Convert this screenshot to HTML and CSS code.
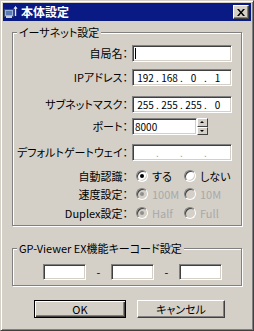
FILE: index.html
```html
<!DOCTYPE html>
<html lang="ja">
<head>
  <meta charset="UTF-8">
  <title>本体設定</title>
  <link rel="stylesheet" href="styles.css">
</head>
<body>
  <div class="window">
    <div class="titlebar">
      <svg class="app-icon" width="14" height="12" viewBox="0 0 14 12">
        <rect x="0.5" y="3.5" width="9" height="7" fill="#9ab4d8" stroke="#3a4a6a"/>
        <rect x="2" y="5" width="6" height="4" fill="#5a7ab8"/>
        <rect x="2" y="10" width="6" height="2" fill="#c8d0dc"/>
        <path d="M11.5 1v9" stroke="#e8e8e8" stroke-width="1.4"/>
        <path d="M10 3l1.5-2.5L13 3" fill="none" stroke="#e8e8e8"/>
      </svg>
      <span class="title">本体設定</span>
      <span class="close">
        <svg width="8" height="7" viewBox="0 0 8 7">
          <path d="M0 0h2l2 2.5L6 0h2L5 3.5 8 7H6L4 4.5 2 7H0l3-3.5z" fill="#000"/>
        </svg>
      </span>
    </div>

    <div class="content">
      <fieldset class="group ethernet">
        <legend>イーサネット設定</legend>
        <div class="form">
          <label>自局名：</label>
          <div class="edit"><span class="caret"></span></div>

          <label>IPアドレス：</label>
          <div class="edit ip">
            <span>192</span><i>.</i><span>168</span><i>.</i><span>0</span><i>.</i><span>1</span>
          </div>

          <label>サブネットマスク：</label>
          <div class="edit ip">
            <span>255</span><i>.</i><span>255</span><i>.</i><span>255</span><i>.</i><span>0</span>
          </div>

          <label>ポート：</label>
          <div class="spin">
            <div class="edit text">8000</div>
            <div class="spin-buttons">
              <span class="arrow up"></span>
              <span class="arrow down"></span>
            </div>
          </div>

          <label>デフォルトゲートウェイ：</label>
          <div class="edit ip empty">
            <span></span><i>.</i><span></span><i>.</i><span></span><i>.</i><span></span>
          </div>

          <label class="radio-label">自動認識：</label>
          <div class="choices">
            <span class="radio checked"><b></b>する</span>
            <span class="radio"><b></b>しない</span>
          </div>

          <label class="radio-label">速度設定：</label>
          <div class="choices disabled">
            <span class="radio checked"><b></b>100M</span>
            <span class="radio"><b></b>10M</span>
          </div>

          <label class="radio-label">Duplex設定：</label>
          <div class="choices disabled">
            <span class="radio checked"><b></b>Half</span>
            <span class="radio"><b></b>Full</span>
          </div>
        </div>
      </fieldset>

      <fieldset class="group keycode">
        <legend>GP-Viewer EX機能キーコード設定</legend>
        <div class="keys">
          <div class="edit"></div>
          <span class="dash">-</span>
          <div class="edit"></div>
          <span class="dash">-</span>
          <div class="edit"></div>
        </div>
      </fieldset>

      <div class="buttons">
        <button class="btn default">OK</button>
        <button class="btn">キャンセル</button>
      </div>
    </div>
  </div>
</body>
</html>
```

FILE: styles.css
```css
* {
  box-sizing: border-box;
}

body {
  margin: 0;
  font-family: "Noto Sans CJK JP", sans-serif;
  font-size: 11px;
  font-feature-settings: "palt";
  color: #000;
}

.window {
  width: 254px;
  height: 331px;
  padding: 2px;
  background-color: #d4d0c8;
  border: 1px solid;
  border-color: #d4d0c8 #404040 #404040 #d4d0c8;
  box-shadow: inset 1px 1px #fff, inset -1px -1px #808080;
}

.titlebar {
  display: flex;
  align-items: center;
  height: 18px;
  padding: 0 2px 0 1px;
  background-color: #0a1a84;
  color: #fff;

  .app-icon {
    flex: none;
  }

  .title {
    margin-left: 3px;
    font-size: 12px;
    font-weight: 700;
    line-height: 18px;
  }

  .close {
    display: flex;
    align-items: center;
    justify-content: center;
    width: 16px;
    height: 14px;
    margin-left: auto;
    background-color: #d4d0c8;
    border: 1px solid;
    border-color: #fff #404040 #404040 #fff;
    box-shadow: inset -1px -1px #808080;
  }
}

.content {
  padding: 5px 9px 0;
}

.group {
  margin: 0;
  padding: 0;
  min-width: 0;
  border: 1px solid #808080;
  box-shadow: 1px 1px 0 #fff, inset 1px 1px 0 #fff;

  legend {
    margin-left: 4px;
    padding: 0 2px;
    line-height: 12px;
    background-color: #d4d0c8;
  }
}

.form {
  display: grid;
  grid-template-columns: 115px 100px;
  grid-template-rows: 24px 27px 22px 26px 25px 18px 19px 14px;
  column-gap: 4px;
  align-items: start;
  padding: 7px 0 5px;

  label {
    text-align: right;
    line-height: 17px;
    white-space: nowrap;
  }

  .radio-label {
    line-height: 14px;
  }
}

.edit {
  height: 17px;
  background-color: #fff;
  border: 1px solid;
  border-color: #808080 #fff #fff #808080;
  box-shadow: inset 1px 1px #404040, inset -1px -1px #d4d0c8;
}

.edit.text {
  padding: 0 2px;
  font-size: 10px;
  line-height: 15px;
}

.caret {
  display: block;
  width: 1px;
  height: 11px;
  margin: 2px 0 0 2px;
  background-color: #000;
}

.ip {
  display: flex;
  padding-left: 4px;
  font-size: 10px;
  line-height: 15px;

  span {
    width: 17px;
    text-align: center;
  }

  i {
    width: 7px;
    font-style: normal;
    text-align: center;
  }
}

.ip.empty i {
  color: #a0a0a0;
}

.spin {
  display: flex;

  .edit {
    width: 65px;
  }
}

.spin-buttons {
  display: flex;
  flex-direction: column;
  width: 11px;
  height: 17px;
}

.arrow {
  position: relative;
  flex: 1;
  background-color: #d4d0c8;
  border: 1px solid;
  border-color: #fff #404040 #404040 #fff;

  &::after {
    content: "";
    position: absolute;
    left: 2px;
    top: 1px;
    border: 2px solid transparent;
  }
}

.arrow.up::after {
  top: 0;
  border-bottom-color: #000;
}

.arrow.down::after {
  top: 2px;
  border-top-color: #000;
}

.choices {
  display: flex;
  padding-left: 4px;
  line-height: 14px;
}

.radio {
  display: flex;
  align-items: center;
  gap: 4px;
  width: 49px;
  white-space: nowrap;

  b {
    display: flex;
    align-items: center;
    justify-content: center;
    width: 12px;
    height: 12px;
    background-color: #fff;
    border: 1px solid;
    border-color: #808080 #fff #fff #808080;
    border-radius: 50%;
    box-shadow: inset 1px 1px #404040, inset -1px -1px #d4d0c8;
  }
}

.radio.checked b::after {
  content: "";
  width: 4px;
  height: 4px;
  border-radius: 50%;
  background-color: #000;
}

.disabled {
  color: #a8a8a8;

  .radio b {
    background-color: #d4d0c8;
  }

  .radio.checked b::after {
    background-color: #909090;
  }
}

.keycode {
  margin-top: 16px;
}

.keys {
  display: flex;
  align-items: center;
  padding: 10px 0 5px 30px;

  .edit {
    width: 43px;
    height: 16px;
  }

  .dash {
    width: 25px;
    text-align: center;
  }
}

.buttons {
  display: flex;
  gap: 11px;
  margin-top: 14px;
  padding-left: 22px;
}

.btn {
  height: 18px;
  width: 88px;
  padding: 0;
  font: inherit;
  font-feature-settings: "palt";
  background-color: #d4d0c8;
  border: 1px solid;
  border-color: #fff #404040 #404040 #fff;
  box-shadow: inset -1px -1px #808080;
  color: #000;
}

.btn.default {
  width: 92px;
  border-color: #000;
  box-shadow: inset 1px 1px #fff, inset -1px -1px #404040, inset -2px -2px #808080;
}
```
